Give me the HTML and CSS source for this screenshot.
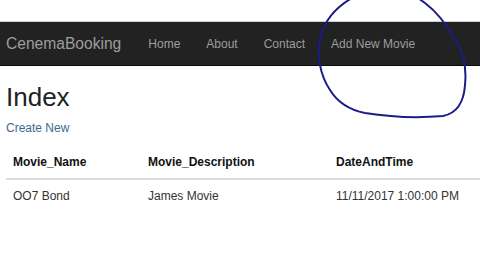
FILE: index.html
```html
<!DOCTYPE html>
<html>
<head>
<meta charset="utf-8">
<link rel="stylesheet" href="styles.css">
</head>
<body>
<div class="page">
  <nav class="navbar">
    <a class="brand">CenemaBooking</a>
    <a class="nav-link">Home</a>
    <a class="nav-link">About</a>
    <a class="nav-link">Contact</a>
    <a class="nav-link">Add New Movie</a>
  </nav>
  <main class="content">
    <h1 class="title">Index</h1>
    <p class="create"><a class="create-link">Create New</a></p>
    <div class="table">
      <div class="cell head">Movie_Name</div>
      <div class="cell head">Movie_Description</div>
      <div class="cell head">DateAndTime</div>
      <div class="cell">OO7 Bond</div>
      <div class="cell">James Movie</div>
      <div class="cell">11/11/2017 1:00:00 PM</div>
    </div>
  </main>
  <svg class="scribble" width="480" height="270" viewBox="0 0 480 270">
    <path d="M352,-2 C338,6 326,18 321,35 C316,55 320,75 330,90 C338,103 350,110 365,113 C390,117 420,118 443,116 C458,113 464,100 465,85 C467,65 462,50 455,40 C447,25 437,12 425,3 L418,-2" fill="none" stroke="#1c1c86" stroke-width="2" stroke-linecap="round"/>
  </svg>
</div>
</body>
</html>
```
FILE: styles.css
```css
html, body {
  margin: 0;
  padding: 0;
  background: #fff;
}
body {
  font-family: "Liberation Sans", Arial, sans-serif;
  color: #333;
  width: 480px;
  height: 270px;
  overflow: hidden;
}
.page {
  position: relative;
  width: 480px;
  height: 270px;
  padding-top: 21px;
  box-sizing: border-box;
}
.navbar {
  display: flex;
  align-items: center;
  height: 45px;
  box-sizing: border-box;
  background: #222;
  border-top: 1px solid #cfcfcf;
  border-bottom: 1px solid #080808;
  padding-left: 6px;
}
.brand {
  font-size: 15.6px;
  color: #9d9d9d;
  margin-right: 14px;
}
.nav-link {
  font-size: 12px;
  color: #9d9d9d;
  padding: 0 13px;
}
.content {
  padding: 0 0 0 6px;
}
.title {
  font-size: 26px;
  font-weight: normal;
  line-height: 30px;
  margin: 16px 0 0;
  color: #222;
}
.create {
  margin: 8px 0 0;
  font-size: 12px;
  line-height: 17px;
}
.create-link {
  color: #3c6a8e;
}
.table {
  display: grid;
  grid-template-columns: 135px 188px 1fr;
  margin-top: 10px;
  font-size: 12px;
  line-height: 17px;
}
.cell {
  padding: 8px 7px 6px;
}
.cell.head {
  font-weight: bold;
  color: #111;
  padding: 7px 7px;
  border-bottom: 2px solid #ddd;
}
.scribble {
  position: absolute;
  left: 0;
  top: 0;
}
```
